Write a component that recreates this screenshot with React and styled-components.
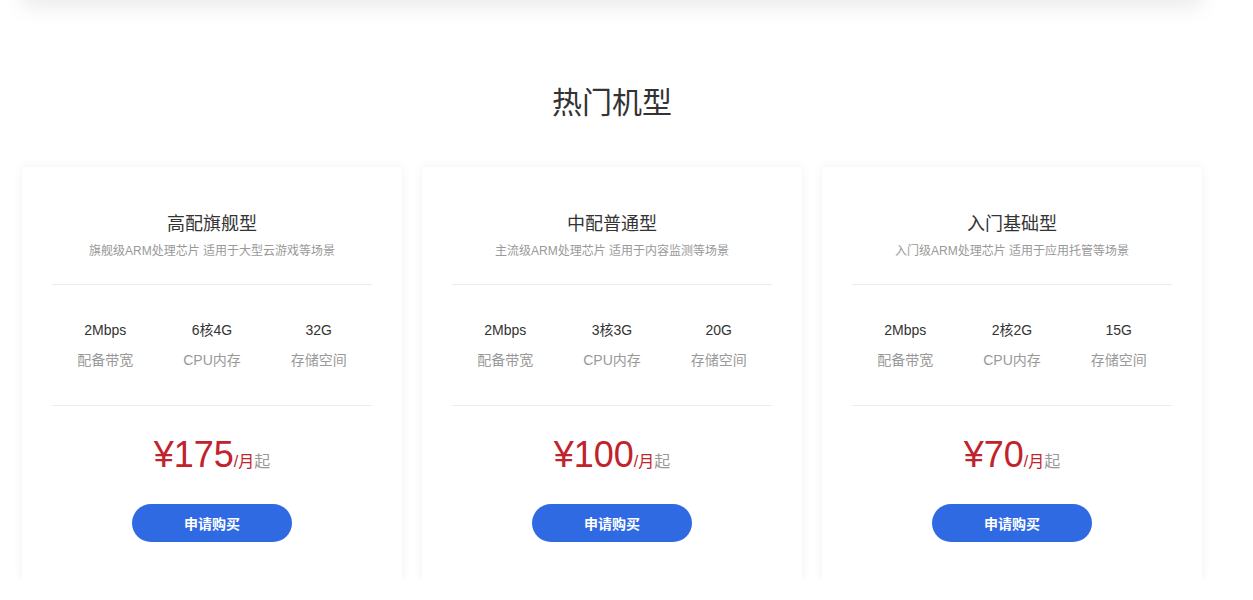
import React from "react";
import styled, { createGlobalStyle } from "styled-components";

const GlobalStyle = createGlobalStyle`
    body {
        margin: 0;
        background: #ffffff;
        font-family: "Liberation Sans", "Noto Sans CJK SC", sans-serif;
        overflow: hidden;
    }
`;

const Page = styled.div`
    width: 1180px;
    margin-left: 22px;
`;

/* bottom edge of the block above, only its shadow shows */
const TopBlock = styled.div`
    height: 40px;
    margin-top: -40px;
    background: #ffffff;
    box-shadow: 0 6px 22px rgba(0, 0, 0, 0.09);
`;

const Title = styled.h2`
    margin: 82px 0 0;
    font-size: 30px;
    line-height: 42px;
    font-weight: 400;
    color: #333;
    text-align: center;
`;

const Cards = styled.div`
    display: grid;
    grid-template-columns: repeat(3, 380px);
    gap: 20px;
    margin-top: 43px;
`;

const Card = styled.div`
    height: 414px;
    box-sizing: border-box;
    padding: 45px 30px 0;
    background: #ffffff;
    box-shadow: 0 0 10px rgba(0, 0, 0, 0.06);
    text-align: center;
`;

const CardTitle = styled.div`
    font-size: 18px;
    line-height: 24px;
    color: #333;
`;

const CardDesc = styled.div`
    margin-top: 6px;
    font-size: 12px;
    line-height: 18px;
    color: #999;
`;

const Divider = styled.div`
    height: 1px;
    background: #ececec;
    margin-top: ${({ top }) => top}px;
`;

const Specs = styled.div`
    display: grid;
    grid-template-columns: repeat(3, 1fr);
    margin-top: 35px;
`;

const Spec = styled.div`
    display: flex;
    flex-direction: column;
    gap: 10px;
`;

const SpecValue = styled.span`
    font-size: 14px;
    line-height: 20px;
    color: #333;
`;

const SpecLabel = styled.span`
    font-size: 14px;
    line-height: 20px;
    color: #999;
`;

const Price = styled.div`
    margin-top: 29px;
    height: 40px;
    display: flex;
    justify-content: center;
    align-items: baseline;
    color: #c0232c;
`;

const Amount = styled.span`
    font-size: 36px;
    line-height: 40px;
`;

const Unit = styled.span`
    font-size: 16px;
    color: #c0232c;
`;

const Suffix = styled.span`
    font-size: 16px;
    color: #999;
`;

const BuyButton = styled.button`
    display: block;
    margin: 29px auto 0;
    width: 160px;
    height: 38px;
    border: none;
    border-radius: 19px;
    background: #2f6ae3;
    color: #ffffff;
    font-family: inherit;
    font-size: 14px;
    font-weight: 700;
    cursor: pointer;
`;

const plans = [
    {
        name: "高配旗舰型",
        desc: "旗舰级ARM处理芯片 适用于大型云游戏等场景",
        specs: ["2Mbps", "6核4G", "32G"],
        price: 175,
    },
    {
        name: "中配普通型",
        desc: "主流级ARM处理芯片 适用于内容监测等场景",
        specs: ["2Mbps", "3核3G", "20G"],
        price: 100,
    },
    {
        name: "入门基础型",
        desc: "入门级ARM处理芯片 适用于应用托管等场景",
        specs: ["2Mbps", "2核2G", "15G"],
        price: 70,
    },
];

const labels = ["配备带宽", "CPU内存", "存储空间"];

const App = () => {
    return (
        <>
            <GlobalStyle />
            <Page>
                <TopBlock />
                <Title>热门机型</Title>
                <Cards>
                    {plans.map((p) => (
                        <Card key={p.name}>
                            <CardTitle>{p.name}</CardTitle>
                            <CardDesc>{p.desc}</CardDesc>
                            <Divider top={24} />
                            <Specs>
                                {p.specs.map((v, i) => (
                                    <Spec key={labels[i]}>
                                        <SpecValue>{v}</SpecValue>
                                        <SpecLabel>{labels[i]}</SpecLabel>
                                    </Spec>
                                ))}
                            </Specs>
                            <Divider top={35} />
                            <Price>
                                <Amount>¥{p.price}</Amount>
                                <Unit>/月</Unit>
                                <Suffix>起</Suffix>
                            </Price>
                            <BuyButton>申请购买</BuyButton>
                        </Card>
                    ))}
                </Cards>
            </Page>
        </>
    );
};

export default App;
